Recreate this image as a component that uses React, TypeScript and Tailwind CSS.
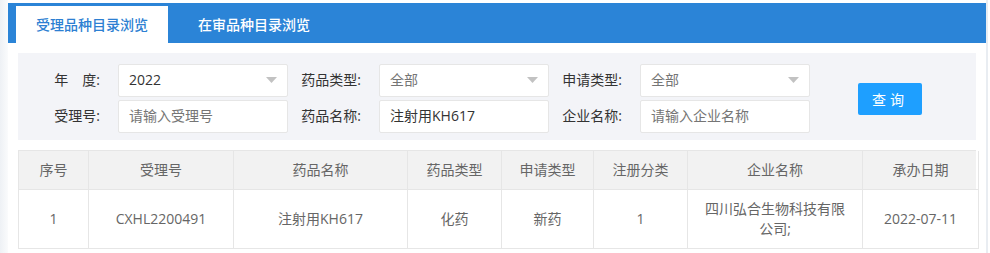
import React from "react";

const font = { fontFamily: '"Open Sans", "Noto Sans CJK SC", sans-serif' };

function Caret() {
  return (
    <svg width="11" height="6" viewBox="0 0 11 6" className="shrink-0">
      <path d="M0 0 L11 0 L5.5 6 Z" fill="#c2c2c2" />
    </svg>
  );
}

function Label({ children }: { children: React.ReactNode }) {
  return (
    <div className="w-[91px] shrink-0 pr-[18px] text-right text-[14px] leading-[20px] text-[#333] whitespace-pre">
      {children}
    </div>
  );
}

function SelectBox({ value, muted }: { value: string; muted?: boolean }) {
  return (
    <div className="flex h-[33px] w-[170px] shrink-0 items-center justify-between rounded-[2px] border border-[#e6e6e6] bg-white pl-[10px] pr-[10px]">
      <span className={`text-[14px] leading-[20px] ${muted ? "text-[#757575]" : "text-[#333]"}`}>{value}</span>
      <Caret />
    </div>
  );
}

function InputBox({ value, placeholder }: { value?: string; placeholder?: string }) {
  return (
    <div className="flex h-[33px] w-[170px] shrink-0 items-center rounded-[2px] border border-[#e6e6e6] bg-white pl-[10px]">
      {value ? (
        <span className="text-[14px] leading-[20px] text-[#333]">{value}</span>
      ) : (
        <span className="text-[14px] leading-[20px] text-[#757575]">{placeholder}</span>
      )}
    </div>
  );
}

const cols = [70, 145, 174, 94, 92, 94, 175, 116];
const headers = ["序号", "受理号", "药品名称", "药品类型", "申请类型", "注册分类", "企业名称", "承办日期"];
const row = ["1", "CXHL2200491", "注射用KH617", "化药", "新药", "1", "四川弘合生物科技有限公司;", "2022-07-11"];

export default function App() {
  return (
    <div className="h-[253px] w-[990px] overflow-hidden bg-white" style={font}>
      <div className="flex h-full">
        <div className="w-[8px] shrink-0 bg-gradient-to-r from-[#eef1f5] to-[#fafbfc]" />
        <div className="flex w-[980px] flex-col border-r-[2px] border-[#e9edf2] pt-[3px]">
          {/* tab bar */}
          <div className="flex h-[40px] items-end bg-[#2b84d7] pl-[8px]">
            <div className="flex h-[37px] w-[152px] items-center justify-center bg-white pb-[1px] text-[14px] font-medium text-[#2d7fd2]">
              受理品种目录浏览
            </div>
            <div className="flex h-[37px] w-[172px] items-center justify-center pb-[1px] text-[14px] font-medium text-white">
              在审品种目录浏览
            </div>
          </div>

          <div className="px-[10px] pt-[10px]">
            {/* filter panel */}
            <div className="flex h-[87px] items-center bg-[#f3f4f8] pl-[9px]">
              <div className="flex flex-col gap-[3px] pt-[3px]">
                <div className="flex items-center">
                  <Label>{"年　度:"}</Label>
                  <SelectBox value="2022" />
                  <Label>药品类型:</Label>
                  <SelectBox value="全部" muted />
                  <Label>申请类型:</Label>
                  <SelectBox value="全部" muted />
                </div>
                <div className="flex items-center">
                  <Label>受理号:</Label>
                  <InputBox placeholder="请输入受理号" />
                  <Label>药品名称:</Label>
                  <InputBox value="注射用KH617" />
                  <Label>企业名称:</Label>
                  <InputBox placeholder="请输入企业名称" />
                </div>
              </div>
              <button className="ml-[48px] mt-[5px] flex h-[32px] w-[64px] items-center justify-center rounded-[2px] bg-[#1e9fff] text-[14px] tracking-[4px] text-white">
                查询
              </button>
            </div>

            {/* table */}
            <div className="mt-[10px] border-l border-t border-[#e6e6e6]">
              <div className="flex bg-[#f2f2f2]">
                {headers.map((h, i) => (
                  <div
                    key={h}
                    style={{ width: cols[i] }}
                    className="shrink-0 border-b border-r border-[#e6e6e6] px-[15px] py-[9px] text-center text-[14px] leading-[20px] text-[#666]"
                  >
                    {h}
                  </div>
                ))}
              </div>
              <div className="flex bg-white">
                {row.map((c, i) => (
                  <div
                    key={i}
                    style={{ width: cols[i] }}
                    className="flex shrink-0 items-center justify-center border-b border-r border-[#e6e6e6] px-[15px] py-[9px] text-center text-[14px] leading-[20px] text-[#666]"
                  >
                    {c}
                  </div>
                ))}
              </div>
            </div>
          </div>
        </div>
      </div>
    </div>
  );
}
